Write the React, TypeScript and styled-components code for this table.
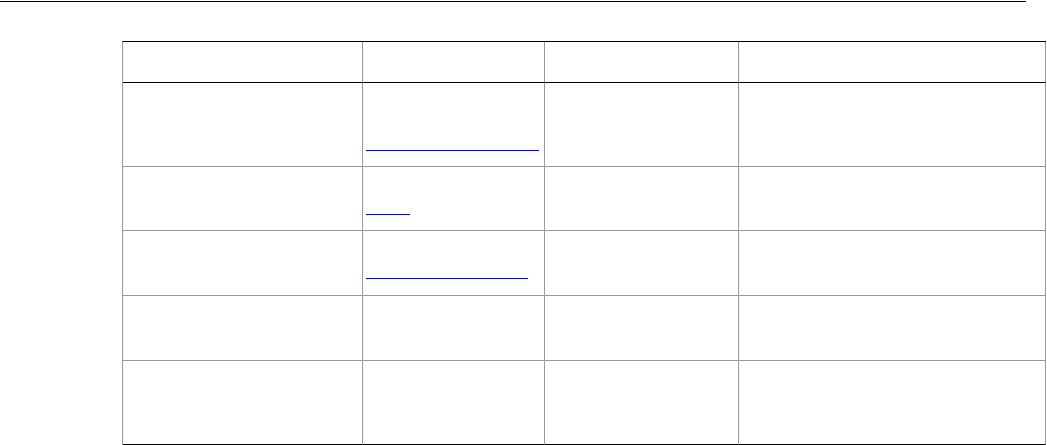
import React from 'react';
import styled, { createGlobalStyle } from 'styled-components';

const GlobalStyle = createGlobalStyle`
    html, body {
        margin: 0;
        padding: 0;
        background: #ffffff;
        font-family: "Liberation Sans", Arial, sans-serif;
    }
`;

const Page = styled.div`
    display: flex;
    flex-direction: column;
    width: 1047px;
    height: 445px;
    overflow: hidden;
`;

const TopRule = styled.div`
    margin-top: 1px;
    width: 1026px;
    height: 1px;
    background: #000000;
`;

const Table = styled.div`
    display: grid;
    grid-template-columns: 240px 182px 194px 307px;
    margin: 39px 0 0 122px;
    width: 924px;
    border-left: 1px solid #999999;
    border-top: 1px solid #000000;
    box-sizing: border-box;
`;

const Cell = styled.div<{ $height: number; $last?: boolean; $head?: boolean }>`
    display: flex;
    flex-direction: column;
    height: ${p => p.$height}px;
    box-sizing: border-box;
    border-right: 1px solid #999999;
    border-bottom: 1px solid ${p => (p.$head || p.$last ? '#000000' : '#999999')};
`;

const Link = styled.span<{ $width: number; $top: number }>`
    display: block;
    margin: ${p => p.$top}px 0 0 3px;
    width: ${p => p.$width}px;
    height: 0;
    border-bottom: 1px solid #0000ff;
`;

type Row = { height: number; link?: { width: number; top: number } };

const rows: Row[] = [
    { height: 84, link: { width: 173, top: 67 } },
    { height: 64, link: { width: 44, top: 47 } },
    { height: 65, link: { width: 162, top: 47 } },
    { height: 65 },
    { height: 84 },
];

const App: React.FC = () => {
    return (
        <>
            <GlobalStyle />
            <Page>
                <TopRule />
                <Table>
                    {[0, 1, 2, 3].map(c => (
                        <Cell key={`h${c}`} $height={41} $head />
                    ))}
                    {rows.map((row, r) => (
                        <React.Fragment key={r}>
                            {[0, 1, 2, 3].map(c => (
                                <Cell key={c} $height={row.height} $last={r === rows.length - 1}>
                                    {c === 1 && row.link && <Link $width={row.link.width} $top={row.link.top} />}
                                </Cell>
                            ))}
                        </React.Fragment>
                    ))}
                </Table>
            </Page>
        </>
    );
};

export default App;
